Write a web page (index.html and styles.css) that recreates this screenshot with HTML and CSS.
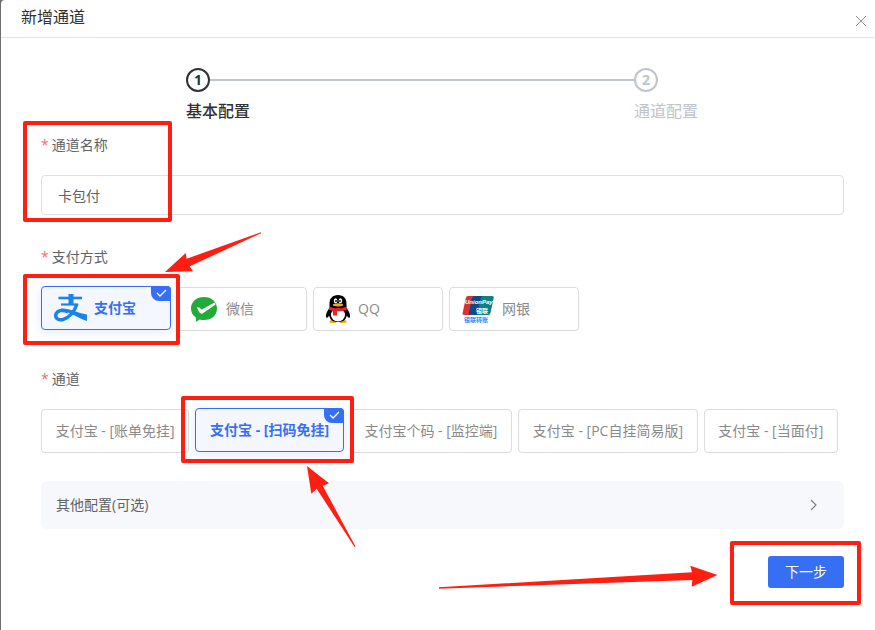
FILE: index.html
```html
<!DOCTYPE html>
<html lang="zh-CN">
  <head>
    <meta charset="utf-8" />
    <meta name="viewport" content="width=device-width, initial-scale=1" />
    <title>新增通道</title>
    <link rel="stylesheet" href="styles.css">
  </head>
  <body>
    <div class="dialog" role="dialog" aria-labelledby="dialog-title">
      <header class="dialog-header">
        <h1 class="dialog-title" id="dialog-title">新增通道</h1>
        <button class="dialog-close" type="button" aria-label="关闭">
          <svg width="12" height="12" viewBox="0 0 12 12">
            <path d="M1 1 L11 11 M11 1 L1 11" fill="none" stroke="#909399" />
          </svg>
        </button>
      </header>

      <form class="dialog-body">
        <ol class="steps">
          <li class="step step-active">
            <div class="step-head"><span class="step-icon">1</span></div>
            <div class="step-title">基本配置</div>
          </li>
          <li class="step">
            <div class="step-head"><span class="step-icon">2</span></div>
            <div class="step-title">通道配置</div>
          </li>
        </ol>

        <div class="form-item">
          <label class="form-label" for="channel-name">通道名称</label>
          <input class="form-input" id="channel-name" type="text" value="卡包付" />
        </div>

        <fieldset class="form-item">
          <legend class="form-label">支付方式</legend>
          <div class="options">
            <label class="option option-pay">
              <input type="radio" name="pay" value="alipay" checked />
              <svg class="option-icon" width="32" height="32" viewBox="0 0 32 32">
                <g fill="none" stroke="#1b82ee">
                  <path d="M4.500 6 H28" stroke-width="2.600" />
                  <path d="M7 12.500 H24" stroke-width="2.200" />
                  <path d="M17 2 V12.500" stroke-width="5" />
                  <path d="M23 12 C20.500 19 16 25.500 9 27.500 C4.500 28.500 1 26.500 1.800 22.500 C3 18 9 17.500 14 20" stroke-width="3.400" />
                </g>
                <path d="M7 16.500 C16 16 23 21 33 22.500 V29 C25 27 18 20.500 7 18.500 Z" fill="#1b82ee" />
              </svg>
              <span>支付宝</span>
              <svg class="option-check" width="20" height="15" viewBox="0 0 20 15">
                <path d="M6 7 L9 10 L15 4" fill="none" stroke="#fff" stroke-width="1.3" />
              </svg>
            </label>
            <label class="option option-pay">
              <input type="radio" name="pay" value="wechat" />
              <svg class="option-icon" width="28" height="28" viewBox="0 0 28 28">
                <path d="M14 2 C21.500 2 27 6.800 27 13.500 C27 20.500 21.500 25 14 25 C12.500 25 11 24.800 9.600 24.400 L6 27 L5.800 22.500 C2.800 20.500 1 17.300 1 13.500 C1 6.800 6.500 2 14 2 Z" fill="#22ab38" />
                <path d="M7 12.800 C8.500 11.500 9.800 13.400 12 14.400 L24.500 7.400 C25 8.200 25.300 8.800 25.600 9.600 L12.500 18.400 C10.500 19.500 9 17.500 7 12.800 Z" fill="#fff" />
              </svg>
              <span>微信</span>
            </label>
            <label class="option option-pay">
              <input type="radio" name="pay" value="qq" />
              <svg class="option-icon" width="24" height="30" viewBox="0 0 24 30">
                <path d="M4 27 C4 25 9 25 11 27 C12 29.500 4 29.500 3 28 Z M20 27 C20 25 15 25 13 27 C12 29.500 20 29.500 21 28 Z" fill="#faab08" />
                <path d="M12 1 C6.500 1 3.500 4.500 3.500 9.500 V14 C1 17 -0.800 21 0.200 23.500 C1.300 24.500 2.600 22.500 3.200 21.500 C4 26 7 28 12 28 C17 28 20 26 20.800 21.500 C21.400 22.500 22.700 24.500 23.800 23.500 C24.800 21 23 17 20.500 14 V9.500 C20.500 4.500 17.500 1 12 1 Z" />
                <ellipse cx="12" cy="21" rx="7" ry="6.400" fill="#fff" />
                <ellipse cx="9.600" cy="6.800" rx="1.800" ry="2.500" fill="#fff" />
                <ellipse cx="14.400" cy="6.800" rx="1.800" ry="2.500" fill="#fff" />
                <circle cx="10" cy="7" r="0.900" />
                <circle cx="14" cy="7" r="0.900" />
                <ellipse cx="12" cy="10.800" rx="5.200" ry="1.600" fill="#faab08" />
                <path d="M3.500 12.500 C8 15 16 15 20.500 12.500 L21.500 15.500 C18 17 14 17.400 11 17.300 V21.500 H7 V17 L2.500 15.500 Z" fill="#ec2027" />
              </svg>
              <span>QQ</span>
            </label>
            <label class="option option-pay">
              <input type="radio" name="pay" value="unionpay" />
              <svg class="option-icon" width="32" height="30" viewBox="0 0 32 30">
                <path d="M6 2 H14 L10 21 H2 C0.800 21 0.300 20.300 0.600 19 L3.800 4 C4.200 2.700 4.900 2 6 2 Z" fill="#dc3035" />
                <path d="M13.500 2 H22 L18 21 H8 C7 21 6.500 20.300 6.800 19 L10 4 C10.500 2.600 11.500 2 13.500 2 Z" fill="#104a85" />
                <path d="M22 2 H30 C31.400 2 32 2.800 31.700 4 L28.500 19 C28.200 20.300 27.500 21 26.200 21 H17 C15.800 21 15.300 20.300 15.600 19 L18.800 4 C19.200 2.600 20.200 2 22 2 Z" fill="#0b8285" />
                <text class="union-latin" x="3" y="10">UnionPay</text>
                <text class="union-name" x="14" y="19">银联</text>
                <text class="union-sub" x="2" y="28">银联转账</text>
              </svg>
              <span>网银</span>
            </label>
          </div>
        </fieldset>

        <fieldset class="form-item">
          <legend class="form-label">通道</legend>
          <div class="options options-fill">
            <label class="option">
              <input type="radio" name="channel" value="bill" />
              <span>支付宝 - [账单免挂]</span>
            </label>
            <label class="option">
              <input type="radio" name="channel" value="scan" checked />
              <span>支付宝 - [扫码免挂]</span>
              <svg class="option-check" width="20" height="15" viewBox="0 0 20 15">
                <path d="M6 7 L9 10 L15 4" fill="none" stroke="#fff" stroke-width="1.3" />
              </svg>
            </label>
            <label class="option">
              <input type="radio" name="channel" value="monitor" />
              <span>支付宝个码 - [监控端]</span>
            </label>
            <label class="option">
              <input type="radio" name="channel" value="pc" />
              <span>支付宝 - [PC自挂简易版]</span>
            </label>
            <label class="option">
              <input type="radio" name="channel" value="face" />
              <span>支付宝 - [当面付]</span>
            </label>
          </div>
        </fieldset>

        <button class="collapse" type="button" aria-expanded="false">
          <span>其他配置(可选)</span>
          <svg width="12" height="12" viewBox="0 0 12 12">
            <path d="M3 1 L8 6 L3 11" fill="none" stroke="#808389" stroke-width="1.2" />
          </svg>
        </button>

        <footer class="dialog-footer">
          <button class="btn-primary" type="button">下一步</button>
        </footer>
      </form>
    </div>

    <!-- tutorial marks -->
    <svg class="marks" width="875" height="630" viewBox="0 0 875 630" aria-hidden="true">
      <g fill="none" stroke="#ff1f12" stroke-width="4" stroke-linejoin="round">
        <rect x="25" y="123" width="145" height="97" />
        <rect x="25" y="276" width="153" height="67" />
        <rect x="183" y="398" width="169" height="63" />
        <rect x="732" y="543" width="127" height="60" />
      </g>
      <g fill="#ff1f12">
        <path d="M165 272 L185.700 253 L186.700 258.700 L261 232.300 V233.300 L189.700 266.300 L193 271.300 Z" />
        <path d="M307 466 L329 483.300 L322.700 485.700 L355.500 546.500 L354.500 547 L316.700 488.700 L311.300 493.700 Z" />
        <path d="M717.500 575 L690.300 565.700 L692 572.300 L439 587.200 V588.700 L692.300 580 L691.700 586.700 Z" />
      </g>
    </svg>
  </body>
</html>
```
FILE: styles.css
```css
* {
  box-sizing: border-box;
}

body {
  margin: 0;
  background-color: #6e6e70;
  font-family: "Open Sans", "Noto Sans CJK SC", sans-serif;
  font-size: 14px;
  line-height: 20px;
  color: #606266;
}

button,
input {
  font: inherit;
  color: inherit;
}

.dialog {
  min-height: 100vh;
  margin-left: 1px;
  background-color: #fff;
  border-top-left-radius: 4px;
}

.dialog-header {
  display: flex;
  align-items: flex-start;
  justify-content: space-between;
  height: 38px;
  padding: 0 8px 0 20px;
  border-bottom: 1px solid #e0e1e3;
}

.dialog-title {
  margin: 0;
  font-size: 16px;
  line-height: 34px;
  font-weight: 400;
  color: #303133;
}

.dialog-close {
  display: flex;
  margin-top: 15px;
  padding: 0;
  border: 0;
  background: none;
}

.dialog-body {
  padding: 30px 31px 24px 40px;
}

.steps {
  display: flex;
  margin: 0;
  padding: 0 146px 0 145px;
  list-style: none;
}

.step {
  color: #c0c4cc;
}

.step:first-child {
  flex: 1;
}

.step-head {
  display: flex;
  align-items: center;
}

.step:first-child .step-head::after {
  content: "";
  flex: 1;
  height: 2px;
  background-color: #c0c4cc;
}

.step-icon {
  width: 24px;
  height: 24px;
  border: 2px solid;
  border-radius: 50%;
  font-family: "Noto Sans", sans-serif;
  font-size: 14px;
  line-height: 20px;
  font-weight: 700;
  text-align: center;
}

.step-title {
  font-size: 16px;
  line-height: 38px;
}

.step-active {
  color: #303133;
}

.step-active .step-title {
  font-weight: 500;
}

.form-item {
  min-width: 0;
  margin: 0 0 22px;
  padding: 0;
  border: 0;
}

.steps + .form-item {
  margin-top: -5px;
}

.form-label {
  display: block;
  padding: 0;
  margin-bottom: 10px;
  line-height: 40px;
}

.form-label::before {
  content: "*";
  margin-right: 3px;
  color: #f56c6c;
}

.form-input {
  display: block;
  width: 100%;
  height: 40px;
  padding: 0 16px;
  border: 1px solid #dcdfe6;
  border-radius: 4px;
  background-color: #fff;
}

.options {
  display: flex;
  flex-wrap: wrap;
  gap: 6px;
  padding: 0 6px 6px 0;
}

.option {
  position: relative;
  display: flex;
  align-items: center;
  gap: 8px;
  height: 44px;
  padding: 0 12px;
  border: 1px solid #dcdcdc;
  border-radius: 4px;
  color: #8a8a8a;
  white-space: nowrap;
}

.option-pay {
  width: 130px;
}

.options-fill .option {
  flex: 1 0 auto;
  justify-content: center;
}

.option input {
  position: absolute;
  opacity: 0;
}

.option-icon {
  flex: none;
  overflow: visible;
}

.option:has(input:checked) {
  top: -1px;
  border-color: #366ef4;
  background-color: #f4f7ff;
  box-shadow: 0 2px 12px rgba(54, 110, 244, 0.15);
  color: #366ef4;
  font-weight: 700;
}

.option-check {
  position: absolute;
  top: -1px;
  right: -1px;
  background-color: #366ef4;
  border-radius: 0 4px 0 8px;
}

.union-latin {
  fill: #fff;
  font-family: "Liberation Sans", sans-serif;
  font-size: 6px;
  font-style: italic;
  font-weight: 700;
}

.union-name {
  fill: #fff;
  font-size: 6px;
  font-weight: 700;
}

.union-sub {
  fill: #2b8cff;
  font-size: 6px;
  font-weight: 700;
}

.collapse {
  display: flex;
  align-items: center;
  justify-content: space-between;
  width: 100%;
  height: 48px;
  padding: 0 24px 0 15px;
  border: 0;
  border-radius: 6px;
  background-color: #f7f8fc;
}

.dialog-footer {
  display: flex;
  justify-content: flex-end;
  margin-top: 27px;
}

.btn-primary {
  height: 32px;
  padding: 0 17px;
  border: 0;
  border-radius: 3px;
  background-color: #366ef4;
  color: #fff;
}

.marks {
  position: absolute;
  top: 0;
  left: 0;
  pointer-events: none;
}
```
